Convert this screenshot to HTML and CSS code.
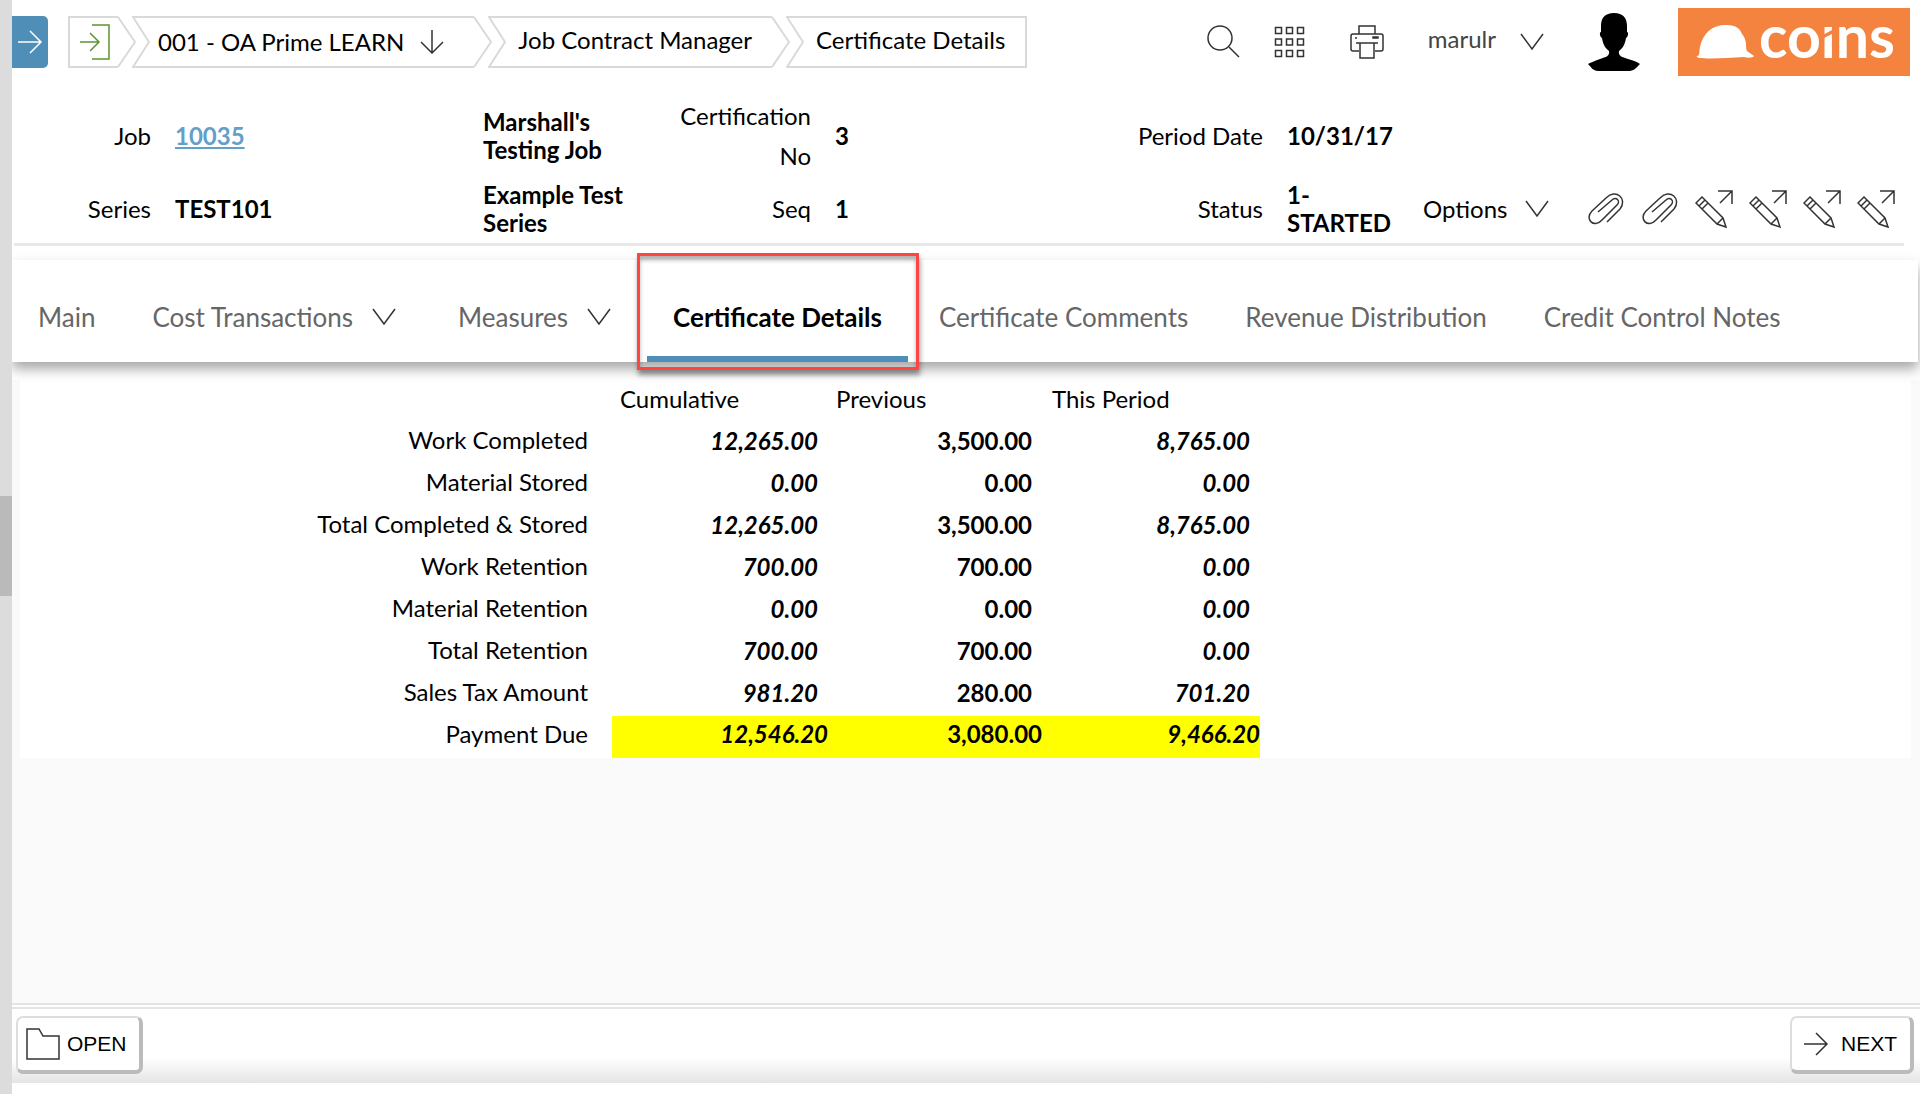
FILE: index.html
```html
<!DOCTYPE html>
<html lang="en">
<head>
<meta charset="utf-8">
<title>Certificate Details</title>
<link rel="stylesheet" href="styles.css">
</head>
<body>
<svg width="0" height="0" class="sprite" aria-hidden="true">
  <symbol id="chevron" viewBox="0 0 24 18"><path d="M1 1l11 15L23 1"/></symbol>
  <symbol id="notch" viewBox="0 0 18 52"><path d="M18 1H1L17 26L1 51H18"/></symbol>
  <symbol id="tip" viewBox="0 0 18 52"><path d="M0 1L17 26L0 51"/></symbol>
  <symbol id="arrow" viewBox="0 0 26 26"><path d="M1 13H24M13 2l11 11L13 24"/></symbol>
  <symbol id="clip" viewBox="0 0 36 34"><path d="M10 20L24 8C28 4 33 9 29 13L14 28C6 37 -4 27 4 19L18 6C28 -4 40 7 32 17L19 30"/></symbol>
  <symbol id="pencil" viewBox="0 0 38 40"><path d="M7 8L1 14L22 35L31 38L28 29ZM4 17L10 11M7 20L13 14M22 35L28 29M25 14L37 2M23 2H37V15"/></symbol>
</svg>
<div class="rail" aria-hidden="true"><div class="rail-thumb"></div></div>
<div class="app">
  <header class="topbar">
    <button class="menu-toggle" aria-label="Open menu"><svg class="icon i26"><use href="#arrow"/></svg></button>
    <nav class="crumbs" aria-label="Breadcrumb">
      <a class="crumb" href="#" aria-label="Exit">
        <span class="crumb-body first"><svg class="icon exit" viewBox="0 0 30 36"><path d="M0 18H19M10 9l9 9l-9 9M12 1H29V35H12"/></svg></span>
        <svg class="edge"><use href="#tip"/></svg>
      </a>
      <a class="crumb" href="#">
        <svg class="edge"><use href="#notch"/></svg>
        <span class="crumb-body company">001 - OA Prime LEARN<svg class="icon down" viewBox="0 0 24 24"><path d="M12 0V23M1 12l11 11l11-11"/></svg></span>
        <svg class="edge"><use href="#tip"/></svg>
      </a>
      <a class="crumb" href="#">
        <svg class="edge"><use href="#notch"/></svg>
        <span class="crumb-body">Job Contract Manager</span>
        <svg class="edge"><use href="#tip"/></svg>
      </a>
      <a class="crumb" href="#">
        <svg class="edge"><use href="#notch"/></svg>
        <span class="crumb-body last">Certificate Details</span>
      </a>
    </nav>
    <div class="tools">
      <button class="tool" aria-label="Search"><svg class="icon i34" viewBox="0 0 34 34"><circle cx="13" cy="13" r="12"/><path d="M22 22l10 10"/></svg></button>
      <button class="tool grid-tool" aria-label="Apps"><svg class="icon i34" viewBox="0 0 34 34"><path d="M2.500 2.500h6v6h-6zM13.500 2.500h6v6h-6zM24.500 2.500h6v6h-6zM2.500 14h6v6h-6zM13.500 14h6v6h-6zM24.500 14h6v6h-6zM2.500 25.500h6v6h-6zM13.500 25.500h6v6h-6zM24.500 25.500h6v6h-6z"/></svg></button>
      <button class="tool print-tool" aria-label="Print"><svg class="icon i34" viewBox="0 0 34 34"><path d="M9 9V1H25V9M9 26H3Q1 26 1 24V11Q1 9 3 9H31Q33 9 33 11V24Q33 26 31 26H25M6 18H28M10 18H24V33H10zM6 12v2M23 12h5v1h-5z"/></svg></button>
      <button class="user"><span class="user-name">marulr</span><svg class="icon chev"><use href="#chevron"/></svg></button>
      <svg class="avatar" viewBox="0 0 52 58" role="img" aria-label="User"><path d="M26 0C17 0 13 5 13 13L13 19C11 19 12 24 14 25C15 31 17 35 21 38C22 43 18 44 12 46C6 48 2 50 0 51C3 54 5 58 10 58H42C47 57 49 54 52 51C50 49 46 48 40 46C34 44 30 43 31 38C35 35 37 31 38 25C40 24 41 19 39 19V13C39 5 35 0 26 0Z"/></svg>
      <svg class="logo" viewBox="0 0 232 68" role="img" aria-label="coins">
        <rect class="logo-bg" width="232" height="68"/>
        <path class="hat" d="M19 48C22 48 21 44 22 39C25 25 34 17 48 17C59 17 62 21 64 26C70 33 67 40 69 43L76 48C75 50 70 50 66 49C50 50 32 51 21 50Q18 49 19 48Z"/>
        <text x="81" y="50">coins</text>
        <path class="logo-bg" d="M80 0H225V18H80ZM141 29L156 21V25L142 32Z"/>
      </svg>
    </div>
  </header>

  <section class="info">
    <span class="label">Job</span><span class="value"><a href="#">10035</a></span><span class="value">Marshall's Testing Job</span>
    <span class="label">Certification No</span><span class="value">3</span>
    <span class="label">Period Date</span><span class="value">10/31/17</span><span></span>
    <span class="label">Series</span><span class="value">TEST101</span><span class="value">Example Test Series</span>
    <span class="label">Seq</span><span class="value">1</span>
    <span class="label">Status</span><span class="value">1-STARTED</span>
    <div class="options">
      <button class="options-btn">Options<svg class="icon chev"><use href="#chevron"/></svg></button>
      <div class="actions">
        <button aria-label="Attachments"><svg class="icon clip"><use href="#clip"/></svg></button>
        <button aria-label="Add attachment"><svg class="icon clip"><use href="#clip"/></svg></button>
        <button aria-label="Edit job"><svg class="icon pencil"><use href="#pencil"/></svg></button>
        <button aria-label="Edit series"><svg class="icon pencil"><use href="#pencil"/></svg></button>
        <button aria-label="Edit certificate"><svg class="icon pencil"><use href="#pencil"/></svg></button>
        <button aria-label="Edit status"><svg class="icon pencil"><use href="#pencil"/></svg></button>
      </div>
    </div>
  </section>

  <nav class="tabs" aria-label="Sections">
    <a href="#">Main</a>
    <a href="#">Cost Transactions<svg class="icon chev"><use href="#chevron"/></svg></a>
    <a href="#">Measures<svg class="icon chev"><use href="#chevron"/></svg></a>
    <a href="#" class="active" aria-current="page">Certificate Details<span class="callout"></span></a>
    <a href="#">Certificate Comments</a>
    <a href="#">Revenue Distribution</a>
    <a href="#">Credit Control Notes</a>
  </nav>

  <main class="content">
    <div class="panel">
      <table>
        <thead><tr><td></td><th scope="col">Cumulative</th><th scope="col">Previous</th><th scope="col">This Period</th></tr></thead>
        <tbody>
          <tr><th scope="row">Work Completed</th><td>12,265.00</td><td>3,500.00</td><td>8,765.00</td></tr>
          <tr><th scope="row">Material Stored</th><td>0.00</td><td>0.00</td><td>0.00</td></tr>
          <tr><th scope="row">Total Completed &amp; Stored</th><td>12,265.00</td><td>3,500.00</td><td>8,765.00</td></tr>
          <tr><th scope="row">Work Retention</th><td>700.00</td><td>700.00</td><td>0.00</td></tr>
          <tr><th scope="row">Material Retention</th><td>0.00</td><td>0.00</td><td>0.00</td></tr>
          <tr><th scope="row">Total Retention</th><td>700.00</td><td>700.00</td><td>0.00</td></tr>
          <tr><th scope="row">Sales Tax Amount</th><td>981.20</td><td>280.00</td><td>701.20</td></tr>
          <tr class="due"><th scope="row">Payment Due</th><td>12,546.20</td><td>3,080.00</td><td>9,466.20</td></tr>
        </tbody>
      </table>
    </div>
  </main>

  <footer class="footer">
    <div class="footer-bar">
      <button class="btn"><svg class="icon i34" viewBox="0 0 34 34"><path d="M1 2H13L17 9H33V32H1Z"/></svg>OPEN</button>
      <button class="btn next"><svg class="icon i26"><use href="#arrow"/></svg>NEXT</button>
    </div>
  </footer>
</div>
</body>
</html>
```
FILE: styles.css
```css
* { box-sizing: border-box; }

body {
  margin: 0;
  display: flex;
  min-height: 100vh;
  background: #fff;
  color: #000;
  font: 24px/28px Lato, "Liberation Sans", sans-serif;
}

button { margin: 0; padding: 0; border: 0; background: none; font: inherit; color: inherit; }
a { color: inherit; text-decoration: none; }

.sprite { position: absolute; }
.icon { display: block; flex: none; fill: none; stroke: #333; stroke-width: 1.5; }
.i26 { width: 26px; height: 26px; }
.i34 { width: 34px; height: 34px; }
.chev { width: 24px; height: 18px; }

/* Scroll rail at the left edge */
.rail { flex: none; width: 12px; display: grid; grid-template-rows: 496fr 100fr 498fr; background: #dcdcdc; }
.rail-thumb { grid-row: 2; background: #bababa; }

.app { flex: 1; min-width: 0; display: flex; flex-direction: column; }

/* Top bar */
.topbar { display: flex; align-items: flex-start; height: 96px; padding: 8px 10px 0 0; }
.menu-toggle {
  display: flex; align-items: center; justify-content: center;
  width: 36px; height: 52px; margin: 8px 20px 0 0;
  background: #4f8fb7; border-radius: 0 5px 5px 0;
}
.menu-toggle .icon { stroke: #fff; }
.crumbs { display: flex; margin-top: 8px; white-space: nowrap; }
.crumb { display: flex; height: 52px; }
.crumb + .crumb { margin-left: -4px; }
.crumb-body {
  display: flex; align-items: center; padding: 0 20px 4px 12px;
  border: solid #d9d9d9; border-width: 2px 0;
}
.crumb-body.first { width: 50px; padding: 0 0 0 10px; border-left-width: 2px; }
.crumb-body.company { padding: 0 30px 0 8px; }
.crumb-body.last { border-right-width: 2px; }
.edge { display: block; width: 18px; height: 52px; fill: none; stroke: #d9d9d9; stroke-width: 2; }
.exit { width: 30px; height: 36px; stroke: #5e9433; }
.down { width: 24px; height: 24px; margin-left: 16px; }

.tools { display: flex; align-items: center; height: 68px; margin-left: auto; }
.grid-tool { margin-left: 32px; }
.print-tool { margin-left: 43px; }
.user { display: flex; align-items: center; gap: 24px; margin: 0 44px; color: #444; }
.user-name { padding-bottom: 6px; }
.avatar { width: 52px; height: 58px; margin-right: 38px; }
.logo { width: 232px; height: 68px; }
.logo-bg { fill: #f4833f; }
.hat { fill: #fff; }
.logo text { fill: #fff; font: 700 59px Lato, sans-serif; }

/* Record summary */
.info {
  display: grid;
  grid-template-columns: 137px 308px 192px 160px 290px 162px 134px 1fr;
  grid-template-rows: 80px 66px;
  align-items: center;
  margin: 0 16px 0 2px;
  padding-bottom: 1px;
  border-bottom: 3px solid #e8e8e8;
}
.label { line-height: 40px; text-align: right; }
.value { padding-left: 24px; font-weight: 700; }
.value a { color: #62a0c8; text-decoration: underline; }
.options { display: flex; align-items: center; justify-content: space-between; padding: 0 9px 0 26px; }
.options-btn { display: flex; align-items: center; gap: 18px; }
.actions { display: flex; gap: 16px; }
.actions button { display: flex; align-items: center; }
.clip { width: 38px; height: 34px; }
.pencil { width: 38px; height: 40px; }

/* Tabs */
.tabs {
  position: relative; z-index: 1;
  display: flex; gap: 5px; height: 102px; margin: 14px 2px 0 0;
  background: #fff; color: #666; font-size: 26px; white-space: nowrap;
  box-shadow: 0 7px 12px rgba(0, 0, 0, .35);
  clip-path: inset(-8px -2px -24px 0);
}
.tabs a { position: relative; display: flex; align-items: center; padding: 18px 26px 0; border-bottom: 6px solid transparent; }
.tabs .chev { margin: 0 5px 0 19px; }
.tabs .active { color: #000; font-weight: 700; border-color: #4f8fb7; }
.callout {
  position: absolute; inset: -7px -11px -14px -10px;
  border: 3px solid #f44; box-shadow: 1px 5px 5px rgba(0, 0, 0, .4), inset 0 4px 4px rgba(0, 0, 0, .3);
}

/* Amounts */
.content { flex: 1; margin-top: 18px; padding: 0 9px 0 8px; background: #fafafa; }
.panel { background: #fff; }
table { width: 1240px; table-layout: fixed; border-collapse: collapse; }
tr { height: 42px; }
th, td { padding: 0 10px 0 0; line-height: 28px; text-align: right; font-weight: 700; }
thead td { width: 592px; }
thead th { padding: 0 0 4px 8px; text-align: left; font-weight: 400; }
tbody th { padding: 0 24px 6px 0; font-weight: 400; }
tbody td { padding-bottom: 4px; font-style: italic; }
tbody td:nth-child(3) { font-style: normal; padding-right: 12px; }
.due td { padding: 0 0 6px; background: #ff0; }
.due td:nth-child(3) { padding-right: 2px; }

/* Footer */
.footer { padding-bottom: 11px; border-top: 2px solid #e4e4e4; background: #fff; }
.footer-bar {
  display: flex; justify-content: space-between; align-items: flex-start;
  height: 76px; margin-top: 2px; padding: 7px 6px 0 4px;
  border-top: 2px solid #e4e4e4;
  background: linear-gradient(#fff 66%, #e4e4e4);
}
.btn {
  display: flex; align-items: center; gap: 7px;
  height: 58px; padding: 0 12px 0 8px;
  border: solid; border-width: 2px 4px 4px 2px; border-color: #ddd #bbb #bbb #ddd; border-radius: 7px;
  background: #fff; font: 21px/28px "Liberation Sans", sans-serif;
}
.btn.next { gap: 12px; padding: 0 13px 0 11px; }
```
